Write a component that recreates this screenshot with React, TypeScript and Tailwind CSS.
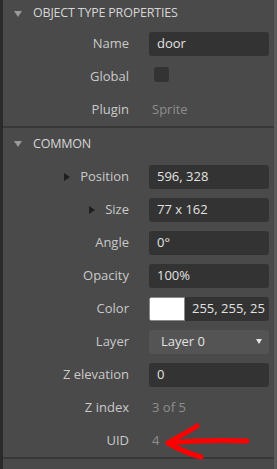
import React from 'react';

const font = { fontFamily: '"Open Sans", "Noto Sans", sans-serif' };

function Header({ title, h }: { title: string; h: string }) {
  return (
    <div className={`flex items-center ${h}`}>
      <svg width="8" height="6" viewBox="0 0 8 6" className="ml-[11px] mr-[11px]">
        <path d="M0 0 H8 L4 6 Z" fill="#9a9a9a" />
      </svg>
      <span className="text-[12.5px] text-[#d6d6d6] tracking-[-0.2px]">{title}</span>
    </div>
  );
}

function Row({ label, expand, indent, children }: { label: string; expand?: boolean; indent?: string; children: React.ReactNode }) {
  return (
    <div className="flex items-center h-[33px]">
      <div className="w-[126px] flex items-center justify-end text-[13px] text-[#c9c9c9]">
        {expand && (
          <svg width="6" height="8" viewBox="0 0 6 8" className={indent}>
            <path d="M0 0 L6 4 L0 8 Z" fill="#1e1e1e" />
          </svg>
        )}
        <span>{label}</span>
      </div>
      <div className="ml-[20px] w-[120px] flex items-center">{children}</div>
    </div>
  );
}

function Input({ value }: { value: string }) {
  return (
    <div className="w-full h-[24px] rounded-[3px] bg-[#333333] flex items-center pl-[8px] text-[13px] text-[#e2e2e2]">
      {value}
    </div>
  );
}

function Muted({ value }: { value: string }) {
  return <span className="pl-[3px] text-[13px] text-[#8e8e8e]">{value}</span>;
}

export default function App() {
  return (
    <div className="relative w-[277px] h-[469px] bg-[#4a4a4a] flex overflow-hidden" style={font}>
      <div className="w-[3px] bg-[#2a2a2a]" />
      <div className="flex-1 flex flex-col">
        <Header title="OBJECT TYPE PROPERTIES" h="h-[27px]" />
        <Row label="Name"><Input value="door" /></Row>
        <Row label="Global">
          <div className="ml-[5px] -mt-[4px] w-[15px] h-[15px] rounded-[3px] bg-[#333333]" />
        </Row>
        <Row label="Plugin"><Muted value="Sprite" /></Row>
        <div className="h-[2px] bg-[#383838]" />

        <Header title="COMMON" h="h-[32px]" />
        <Row label="Position" expand indent="mr-[10px]"><Input value="596, 328" /></Row>
        <Row label="Size" expand indent="mr-[10px]"><Input value="77 x 162" /></Row>
        <Row label="Angle"><Input value="0°" /></Row>
        <Row label="Opacity"><Input value="100%" /></Row>
        <Row label="Color">
          <div className="w-full h-[24px] rounded-[3px] bg-[#333333] flex items-center overflow-hidden">
            <div className="w-[36px] h-[24px] bg-white border border-[#8a8a8a] rounded-l-[2px] shrink-0" />
            <span className="pl-[7px] text-[13px] text-[#e2e2e2] whitespace-nowrap">255, 255, 25</span>
          </div>
        </Row>
        <Row label="Layer">
          <div className="relative w-full h-[24px] rounded-[3px] bg-[#545454] flex items-center pl-[12px] text-[13px] text-[#e2e2e2]">
            Layer 0
            <svg width="6" height="5" viewBox="0 0 6 5" className="absolute right-[7px] top-[9px]">
              <path d="M0 0 H6 L3 5 Z" fill="#e6e6e6" />
            </svg>
          </div>
        </Row>
        <Row label="Z elevation"><Input value="0" /></Row>
        <Row label="Z index"><Muted value="3 of 5" /></Row>
        <Row label="UID"><Muted value="4" /></Row>
        <div className="h-[2px] bg-[#383838]" />
      </div>
      <div className="w-[3px] bg-[#5b5b5b]" />

      {/* hand-drawn annotation arrow */}
      <svg width="277" height="469" className="absolute left-0 top-0 pointer-events-none">
        <g stroke="#ff0000" strokeWidth="5" strokeLinecap="round" strokeLinejoin="round" fill="none">
          <path d="M247 441 C220 440 190 441 168 443" />
          <path d="M197 426 C188 432 176 438 168 443 C178 449 190 454 201 457" />
        </g>
      </svg>
    </div>
  );
}
